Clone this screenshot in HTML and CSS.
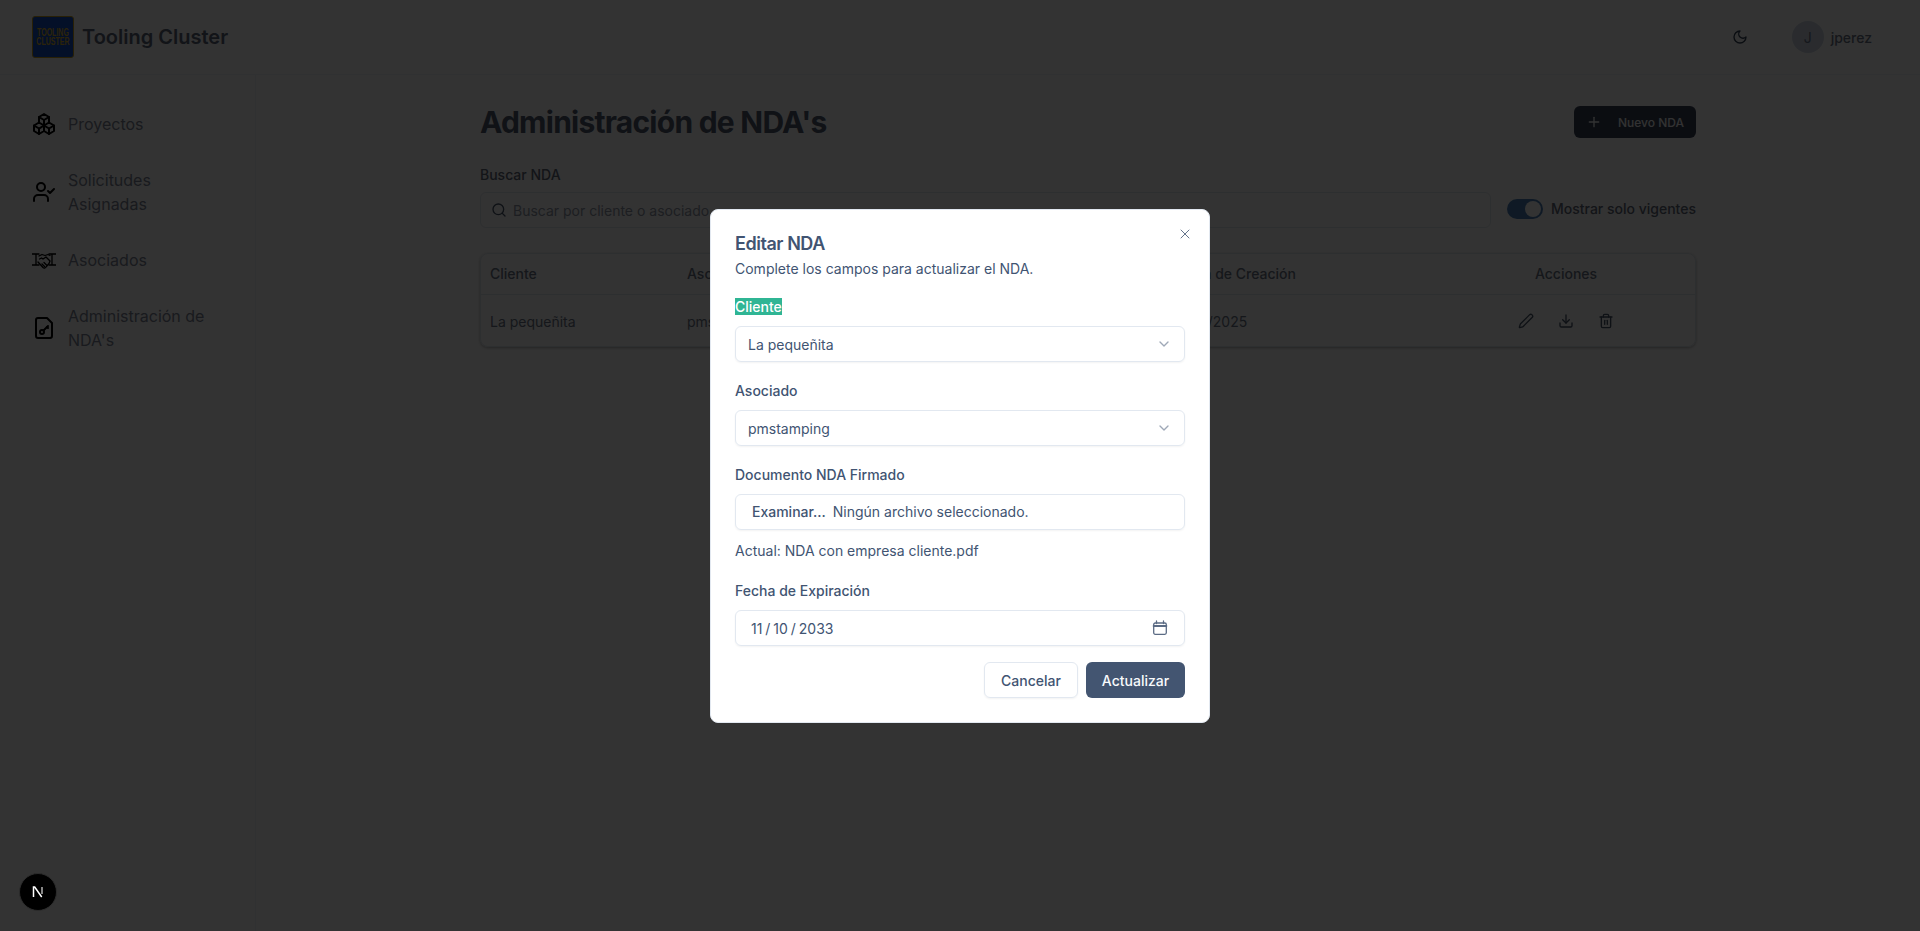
FILE: index.html
```html
<!DOCTYPE html>
<html lang="es">
  <head>
    <meta charset="UTF-8" />
    <meta name="viewport" content="width=device-width, initial-scale=1.0" />
    <title>Tooling Cluster</title>
    <link rel="stylesheet" href="styles.css">
  </head>
  <body>
    <!-- Top bar -->
    <header class="topbar">
      <div class="topbar__brand">
        <div class="topbar__logo"><span>TOOLING</span><span>CLUSTER</span></div>
        <span class="topbar__name">Tooling Cluster</span>
      </div>
      <div class="topbar__user">
        <button class="topbar__theme">
          <svg class="icon-16" viewBox="0 0 24 24"><path d="M12 3a6 6 0 0 0 9 9 9 9 0 1 1-9-9Z"/></svg>
        </button>
        <span class="topbar__avatar">J</span>
        <span class="topbar__username">jperez</span>
      </div>
    </header>

    <div class="shell">
      <!-- Sidebar -->
      <aside class="sidebar">
        <a class="sidebar__item">
          <svg class="sidebar__icon" viewBox="0 0 24 24"><path d="M7 16.5l-5 -3l5 -3l5 3v5.5l-5 3z"/><path d="M2 13.5v5.5l5 3"/><path d="M7 16.545l5 -3.03"/><path d="M17 16.5l-5 -3l5 -3l5 3v5.5l-5 3z"/><path d="M12 19l5 3"/><path d="M17 16.5l5 -3"/><path d="M12 13.5v-5.5l-5 -3l5 -3l5 3v5.5"/><path d="M7 5.03v5.455"/><path d="M12 8l5 -3"/></svg>
          <span class="sidebar__label">Proyectos</span>
        </a>
        <a class="sidebar__item">
          <svg class="sidebar__icon" viewBox="0 0 24 24"><path d="M16 21v-2a4 4 0 0 0-4-4H6a4 4 0 0 0-4 4v2"/><circle cx="9" cy="7" r="4"/><path d="M16 11l2 2 4-4"/></svg>
          <span class="sidebar__label">Solicitudes Asignadas</span>
        </a>
        <a class="sidebar__item">
          <svg class="sidebar__icon" viewBox="0 0 24 24"><path class="thin" d="M0 6h7M0 17h7M4 6v11M24 6h-7M24 17h-7M20 6v11"/><path class="thin" d="M7 8l3-1.500 3 1 3-1 2 1M6 14l5 5.500c1 1 2.500.5 3-.5l3-3.500 1-2.500-4-4-3 2-1.500-1-2 1"/><path class="thin" d="M10 16l2.500 2.500M12 14.500l2.500 2.500"/></svg>
          <span class="sidebar__label">Asociados</span>
        </a>
        <a class="sidebar__item">
          <svg class="sidebar__icon" viewBox="0 0 24 24"><path d="M15 2H6a2 2 0 0 0-2 2v16a2 2 0 0 0 2 2h12a2 2 0 0 0 2-2V7Z"/><circle cx="10" cy="16" r="2"/><path d="M16 10l-4.500 4.500"/><path d="M15 11l1 1"/></svg>
          <span class="sidebar__label">Administración de NDA's</span>
        </a>
      </aside>

      <!-- Main content -->
      <main class="content">
        <div class="content__head">
          <h1 class="content__title">Administración de NDA's</h1>
          <button class="content__new">
            <svg class="icon-16" viewBox="0 0 24 24"><path d="M5 12h14"/><path d="M12 5v14"/></svg>
            <span>Nuevo NDA</span>
          </button>
        </div>

        <div class="filters">
          <div class="filters__search">
            <label class="filters__label">Buscar NDA</label>
            <div class="filters__input">
              <svg class="icon-16" viewBox="0 0 24 24"><circle cx="11" cy="11" r="8"/><path d="M21 21l-4.300-4.300"/></svg>
              <span>Buscar por cliente o asociado</span>
            </div>
          </div>
          <div class="filters__toggle">
            <span class="switch"><span class="switch__thumb"></span></span>
            <span class="filters__label">Mostrar solo vigentes</span>
          </div>
        </div>

        <table class="nda-table">
          <colgroup>
            <col class="col-197">
            <col class="col-160">
            <col class="col-170">
            <col class="col-154">
            <col class="col-275">
            <col class="col-258">
          </colgroup>
          <thead>
            <tr>
              <th>Cliente</th>
              <th>Asociado</th>
              <th></th>
              <th></th>
              <th>Fecha de Creación</th>
              <th class="nda-table__actions-head">Acciones</th>
            </tr>
          </thead>
          <tbody>
            <tr>
              <td>La pequeñita</td>
              <td>pmstamping</td>
              <td></td>
              <td></td>
              <td>12/06/2025</td>
              <td>
                <div class="nda-table__actions">
                  <svg class="icon-16" viewBox="0 0 24 24"><path d="M21.170 6.810a1 1 0 0 0-3.990-3.990L3.840 16.170a2 2 0 0 0-.5.830l-1.320 4.350a.5.5 0 0 0 .620.620l4.350-1.320a2 2 0 0 0 .830-.5z"/></svg>
                  <svg class="icon-16" viewBox="0 0 24 24"><path d="M21 15v4a2 2 0 0 1-2 2H5a2 2 0 0 1-2-2v-4"/><path d="M7 10l5 5 5-5"/><path d="M12 15V3"/></svg>
                  <svg class="icon-16" viewBox="0 0 24 24"><path d="M3 6h18"/><path d="M19 6v14a2 2 0 0 1-2 2H7a2 2 0 0 1-2-2V6"/><path d="M8 6V4a2 2 0 0 1 2-2h4a2 2 0 0 1 2 2v2"/><path d="M10 11v6"/><path d="M14 11v6"/></svg>
                </div>
              </td>
            </tr>
          </tbody>
        </table>
      </main>
    </div>

    <!-- Edit dialog -->
    <div class="overlay">
      <div class="modal">
        <svg class="modal__close" viewBox="0 0 24 24"><path d="M18 6L6 18"/><path d="M6 6l12 12"/></svg>
        <h2 class="modal__title">Editar NDA</h2>
        <p class="modal__text">Complete los campos para actualizar el NDA.</p>

        <div class="modal__form">
          <div class="field">
            <label class="field__label"><span class="field__label--selected">Cliente</span></label>
            <div class="field__box field__box--select">
              <span>La pequeñita</span>
              <svg class="field__chevron" viewBox="0 0 24 24"><path d="M6 9l6 6 6-6"/></svg>
            </div>
          </div>
          <div class="field">
            <label class="field__label">Asociado</label>
            <div class="field__box field__box--select">
              <span>pmstamping</span>
              <svg class="field__chevron" viewBox="0 0 24 24"><path d="M6 9l6 6 6-6"/></svg>
            </div>
          </div>
          <div class="field">
            <label class="field__label">Documento NDA Firmado</label>
            <div class="field__box field__box--file">
              <span class="field__browse">Examinar...</span>
              <span>Ningún archivo seleccionado.</span>
            </div>
            <p class="field__note">Actual: NDA con empresa cliente.pdf</p>
          </div>
          <div class="field">
            <label class="field__label">Fecha de Expiración</label>
            <div class="field__box field__box--date">
              <span class="field__date">11 / 10 / 2033</span>
              <svg class="field__calendar" viewBox="0 0 16 16"><rect x="1.700" y="3" width="12.600" height="11.300" rx="1.500"/><path d="M1.700 6h12.600" class="field__calendar-bar"/><path d="M4.500 1v2.500M11.500 1v2.500"/></svg>
            </div>
          </div>
        </div>

        <div class="modal__footer">
          <button class="modal__button modal__button--cancel">Cancelar</button>
          <button class="modal__button modal__button--save">Actualizar</button>
        </div>
      </div>
    </div>

    <!-- Dev indicator -->
    <div class="dev-badge">
      <svg viewBox="0 0 18 18" class="dev-badge__mark"><path d="M4.500 14V4h1.200l7 10" /><path d="M13 4v7" class="dev-badge__fade"/></svg>
    </div>
  </body>
</html>
```

FILE: styles.css
```css
/* General Styles */
* {
  box-sizing: border-box;
}

html,
body {
  margin: 0;
  height: 931px;
  overflow: hidden;
}

body {
  font-family: Inter, "Noto Sans", sans-serif;
  font-size: 14px;
  color: #5f6878;
  background-color: #fff;
}

h1,
h2,
p {
  margin: 0;
  padding: 0;
}

button {
  font-family: inherit;
  border: none;
  background: none;
  padding: 0;
}

svg {
  fill: none;
  stroke: currentColor;
  stroke-width: 2;
  stroke-linecap: round;
  stroke-linejoin: round;
  flex-shrink: 0;
}

.icon-16 {
  width: 16px;
  height: 16px;
}

/* Top bar */
.topbar {
  height: 75px;
  display: flex;
  align-items: center;
  justify-content: space-between;
  padding: 0 48px 0 32px;
  border-bottom: 1px solid #f1f5f9;
}

.topbar__brand {
  display: flex;
  align-items: center;
  gap: 8px;
}

.topbar__logo {
  width: 42px;
  height: 42px;
  display: flex;
  flex-flow: column;
  align-items: center;
  justify-content: center;
  background-color: #1450c8;
  border: 1px solid #c9a020;
  border-radius: 3px;
  color: #d9b030;
  font-family: "Liberation Sans", sans-serif;
  font-weight: 700;
  font-size: 11px;
  line-height: 9px;
}

.topbar__logo span {
  transform: scaleX(0.64);
  white-space: nowrap;
}

.topbar__name {
  font-size: 20px;
  font-weight: 600;
  color: #5a6478;
}

.topbar__user {
  display: flex;
  align-items: center;
}

.topbar__theme {
  width: 36px;
  height: 36px;
  display: flex;
  align-items: center;
  justify-content: center;
  margin-right: 34px;
  color: #334155;
}

.topbar__avatar {
  width: 32px;
  height: 32px;
  display: flex;
  align-items: center;
  justify-content: center;
  margin-right: 7px;
  border-radius: 50%;
  background-color: #cfd8e6;
  color: #6a768e;
  font-size: 14px;
}

.topbar__username {
  color: #6b7485;
  font-size: 14px;
  font-weight: 500;
}

/* Layout */
.shell {
  display: flex;
  height: 856px;
}

.sidebar {
  width: 256px;
  flex-shrink: 0;
  display: flex;
  flex-flow: column;
  gap: 16px;
  padding: 29px 32px 0;
  border-right: 1px solid #f1f5f9;
}

.sidebar__item {
  display: flex;
  align-items: center;
  gap: 12px;
  padding: 8px 0;
  font-size: 16px;
  line-height: 24px;
  color: #7c8494;
}

.sidebar__icon {
  width: 24px;
  height: 24px;
  color: #000;
}

.sidebar__icon .thin {
  stroke-width: 1.300;
}

.sidebar__label {
  width: 150px;
}

.content {
  width: 1216px;
  margin: 0 auto;
  padding-top: 29px;
}

.content__head {
  display: flex;
  align-items: center;
  justify-content: space-between;
  height: 36px;
}

.content__title {
  font-size: 30px;
  line-height: 36px;
  font-weight: 700;
  letter-spacing: -0.025em;
  color: #505a70;
}

.content__new {
  width: 122px;
  height: 32px;
  display: flex;
  align-items: center;
  gap: 16px;
  padding-left: 12px;
  border-radius: 6px;
  background-color: #3a4358;
  color: #f8fafc;
  font-size: 12px;
  font-weight: 500;
}

/* Filters */
.filters {
  display: flex;
  align-items: flex-end;
  gap: 16px;
  margin-top: 25px;
}

.filters__search {
  flex: 1;
  display: flex;
  flex-flow: column;
  gap: 7px;
}

.filters__label {
  font-size: 14px;
  line-height: 20px;
  font-weight: 500;
  color: #5f6878;
}

.filters__input {
  height: 36px;
  display: flex;
  align-items: center;
  gap: 6px;
  padding-left: 10px;
  border: 1px solid #e2e8f0;
  border-radius: 6px;
  color: #8f97a6;
}

.filters__input svg {
  color: #475569;
}

.filters__toggle {
  height: 36px;
  display: flex;
  align-items: center;
  gap: 8px;
  margin-bottom: 1px;
}

.switch {
  width: 36px;
  height: 20px;
  display: flex;
  justify-content: flex-end;
  padding: 2px;
  border-radius: 10px;
  background-color: #4a7fb8;
}

.switch__thumb {
  width: 16px;
  height: 16px;
  border-radius: 50%;
  background-color: #fff;
}

/* Table */
.nda-table {
  width: 100%;
  margin-top: 25px;
  table-layout: fixed;
  border-collapse: separate;
  border-spacing: 0;
  border: 1px solid #e2e8f0;
  border-radius: 8px;
  box-shadow: 0 1px 3px rgba(0, 0, 0, 0.3);
}

.col-197 { width: 197px; }
.col-160 { width: 160px; }
.col-170 { width: 170px; }
.col-154 { width: 154px; }
.col-275 { width: 275px; }
.col-258 { width: 258px; }

.nda-table th {
  height: 41px;
  padding: 0 9px 2px;
  text-align: left;
  font-weight: 500;
  color: #6b7485;
  border-bottom: 1px solid #e2e8f0;
}

.nda-table td {
  height: 51px;
  padding: 1px 9px 0;
  color: #6b7485;
}

.nda-table .nda-table__actions-head {
  text-align: center;
}

.nda-table__actions {
  display: flex;
  justify-content: center;
  gap: 24px;
  color: #475569;
}

/* Dialog */
.overlay {
  position: fixed;
  inset: 0;
  display: flex;
  align-items: center;
  justify-content: center;
  background-color: rgba(0, 0, 0, 0.8);
}

.modal {
  position: relative;
  width: 500px;
  height: 514px;
  padding: 25px 24px 0;
  border: 1px solid #e2e8f0;
  border-radius: 8px;
  background-color: #fff;
  color: #415472;
}

.modal__close {
  position: absolute;
  top: 16px;
  right: 16px;
  width: 16px;
  height: 16px;
  stroke-width: 1.500;
  color: #64748b;
}

.modal__title {
  font-size: 18px;
  line-height: 18px;
  font-weight: 600;
  letter-spacing: -0.025em;
}

.modal__text {
  margin-top: 6px;
  font-size: 14px;
  line-height: 20px;
}

.modal__form {
  display: flex;
  flex-flow: column;
  gap: 22px;
  margin-top: 21px;
}

.field {
  display: flex;
  flex-flow: column;
  gap: 12px;
}

.field__label {
  font-size: 14px;
  line-height: 14px;
  font-weight: 500;
}

.field__label--selected {
  background-color: #2fb594;
  color: #fff;
}

.field__box {
  height: 36px;
  display: flex;
  align-items: center;
  padding: 0 12px;
  border: 1px solid #e2e8f0;
  border-radius: 6px;
  box-shadow: 0 1px 2px rgba(0, 0, 0, 0.05);
  font-size: 14px;
}

.field__box--select {
  justify-content: space-between;
  padding-top: 1px;
}

.field__box--file {
  gap: 7px;
  padding-left: 16px;
}

.field__box--date {
  justify-content: space-between;
  padding: 2px 20px 0 15px;
}

.field__browse {
  font-weight: 500;
}

.field__date {
  word-spacing: -1px;
}

.field__chevron {
  width: 16px;
  height: 16px;
  margin-right: 0;
  opacity: 0.5;
}

.field__calendar {
  width: 16px;
  height: 16px;
  stroke-width: 1.300;
  color: #5b6b84;
  margin-top: -2px;
  margin-right: -4px;
}

.field__calendar-bar {
  stroke-width: 2;
}

.field__note {
  margin-top: -1px;
  margin-bottom: 1px;
  font-size: 14px;
  line-height: 20px;
}

.modal__footer {
  display: flex;
  justify-content: flex-end;
  gap: 8px;
  margin-top: 16px;
}

.modal__button {
  height: 36px;
  padding-top: 1px;
  border-radius: 6px;
  font-size: 14px;
  font-weight: 500;
}

.modal__button--cancel {
  width: 94px;
  border: 1px solid #e2e8f0;
  color: #415472;
  box-shadow: 0 1px 2px rgba(0, 0, 0, 0.05);
}

.modal__button--save {
  width: 99px;
  background-color: #435571;
  color: #f8fafc;
}

/* Dev indicator */
.dev-badge {
  position: fixed;
  left: 19px;
  bottom: 20px;
  width: 38px;
  height: 38px;
  display: flex;
  align-items: center;
  justify-content: center;
  border: 1px solid #2c2c2c;
  border-radius: 50%;
  background-color: #000;
}

.dev-badge__mark {
  width: 18px;
  height: 18px;
  color: #fff;
  stroke-width: 1.500;
  stroke-linecap: butt;
  stroke-linejoin: miter;
}

.dev-badge__fade {
  opacity: 0.7;
}
```
